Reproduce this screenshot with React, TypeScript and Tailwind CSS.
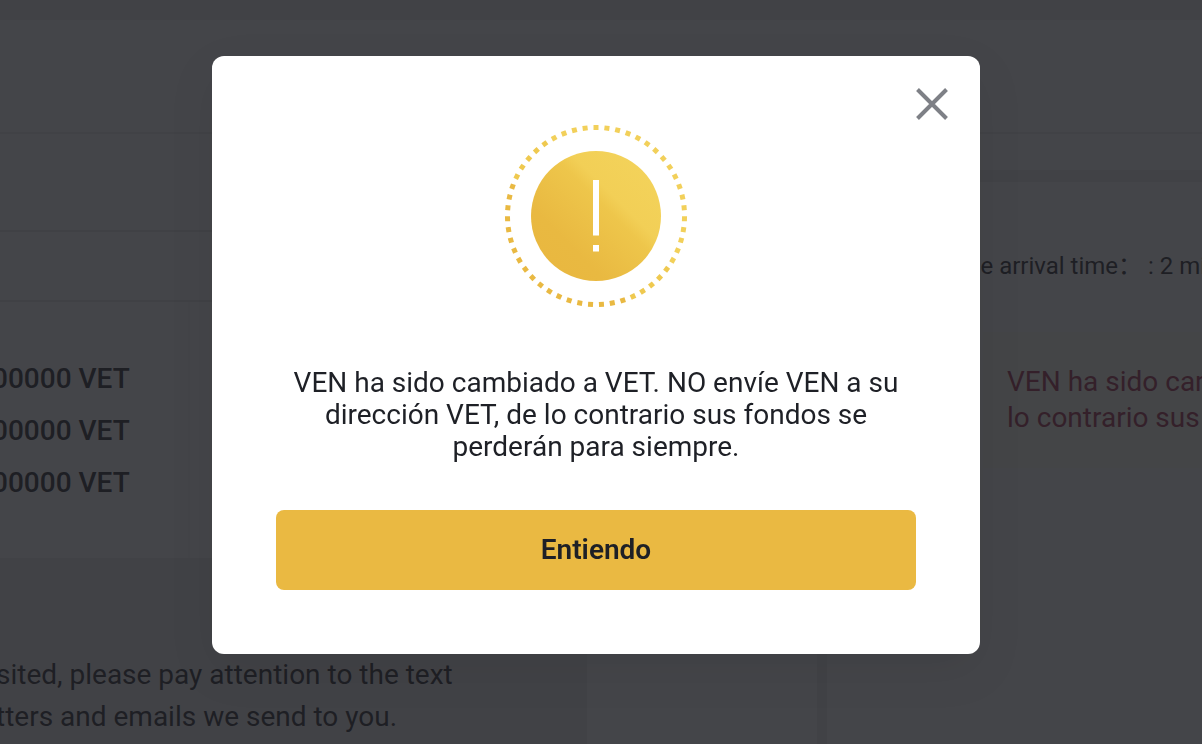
const balances = ["total", "available", "locked"];

const DOTS = 51;

function WarningIcon() {
  return (
    <svg viewBox="0 0 184 184" className="size-[184px]" aria-hidden="true">
      <defs>
        <linearGradient
          id="gold"
          gradientUnits="userSpaceOnUse"
          x1="138"
          y1="46"
          x2="46"
          y2="138"
        >
          <stop offset="0" stopColor="#f3d25a" />
          <stop offset="0.3" stopColor="#f2cf56" />
          <stop offset="0.4" stopColor="#eec64b" />
          <stop offset="0.8" stopColor="#e9b941" />
          <stop offset="1" stopColor="#e9b840" />
        </linearGradient>
      </defs>
      {/* Dotted ring */}
      {Array.from({ length: DOTS }, (_, i) => {
        const a = (i * 2 * Math.PI) / DOTS;
        const x = 92 + 88.5 * Math.sin(a);
        const y = 92 - 88.5 * Math.cos(a);
        const deg = (i * 360) / DOTS;
        return (
          <path
            key={i}
            d={`M${x - 2.5} ${y - 2.5}h5v5h-5z`}
            transform={`rotate(${deg} ${x} ${y})`}
            fill={x - y > 30 ? "#f2d05a" : x - y > -50 ? "#efc94f" : "#e9b942"}
          />
        );
      })}
      <circle cx="92" cy="92" r="65" fill="url(#gold)" />
      <path d="M89 56h6v55.5h-6zM89 121h6v6.5h-6z" fill="#fff" />
    </svg>
  );
}

function WalletPage() {
  return (
    <main className="flex min-h-screen flex-col overflow-hidden bg-[#eeeeee] text-[28px] leading-8 text-[#1e2026]">
      {/* Top bar */}
      <header className="mt-5 h-28 bg-white" />

      <div className="flex grow border-t-2 border-[#e9e9e9]">
        {/* Balances */}
        <section className="flex w-[587px] shrink-0 flex-col">
          <div className="bg-white">
            <div className="h-[98px] border-b-2 border-[#e4e4e4]" />
            <div className="h-[70px] border-b-2 border-[#e4e4e4]" />
            <ul className="-ml-2 flex h-64 w-[198px] flex-col gap-5 border-r-2 border-[#f8f8f8] pt-[61px] font-medium">
              {balances.map((name) => (
                <li key={name}>00000 VET</li>
              ))}
            </ul>
          </div>
          <p className="-ml-1 pt-24 leading-[42px] whitespace-nowrap">
            sited, please pay attention to the text
            <br />
            tters and emails we send to you.
          </p>
        </section>

        <div className="w-[230px] shrink-0 bg-white" />

        {/* Deposit details */}
        <section className="ml-2.5 flex min-w-0 grow flex-col gap-3">
          <div className="h-9 bg-white" />
          <div className="flex grow flex-col gap-[50px] bg-white pt-[68px] pl-[140px] whitespace-nowrap">
            <p className="text-2xl">ge arrival time： : 2 minutos</p>
            <p className="ml-4 bg-[#fffdf2] py-8 pl-6 leading-9 text-[#a02848]">
              VEN ha sido cambiado a VET.
              <br />
              lo contrario sus fondos
            </p>
          </div>
        </section>
      </div>
    </main>
  );
}

function NoticeDialog() {
  return (
    <div className="fixed inset-0 flex items-start justify-center bg-[#1e1f24]/83 pt-14 pr-2.5">
      <div
        role="dialog"
        aria-modal="true"
        aria-describedby="notice"
        className="relative flex w-full max-w-3xl flex-col items-center rounded-xl bg-white px-16 pt-[68px] pb-16 text-[28px] leading-8 text-[#1e2026] shadow-[0_16px_48px_rgba(0,0,0,0.08)]"
      >
        <button
          type="button"
          aria-label="Cerrar"
          className="absolute top-8 right-8 text-[#7e8086]"
        >
          <svg
            viewBox="0 0 32 32"
            className="size-8"
            fill="none"
            stroke="currentColor"
            strokeWidth="4"
          >
            <path d="M1.5 1.5l29 29M30.5 1.5l-29 29" />
          </svg>
        </button>

        <WarningIcon />

        <p id="notice" className="mt-[59px] text-center">
          VEN ha sido cambiado a VET. NO envíe VEN a su dirección VET, de lo
          contrario sus fondos se perderán para siempre.
        </p>

        <button
          type="button"
          className="mt-[47px] h-20 w-full rounded-lg bg-[#eab942] font-semibold"
        >
          Entiendo
        </button>
      </div>
    </div>
  );
}

export default function App() {
  return (
    <div className="font-['Roboto','Noto_Sans_CJK_SC',sans-serif]">
      <WalletPage />
      <NoticeDialog />
    </div>
  );
}
